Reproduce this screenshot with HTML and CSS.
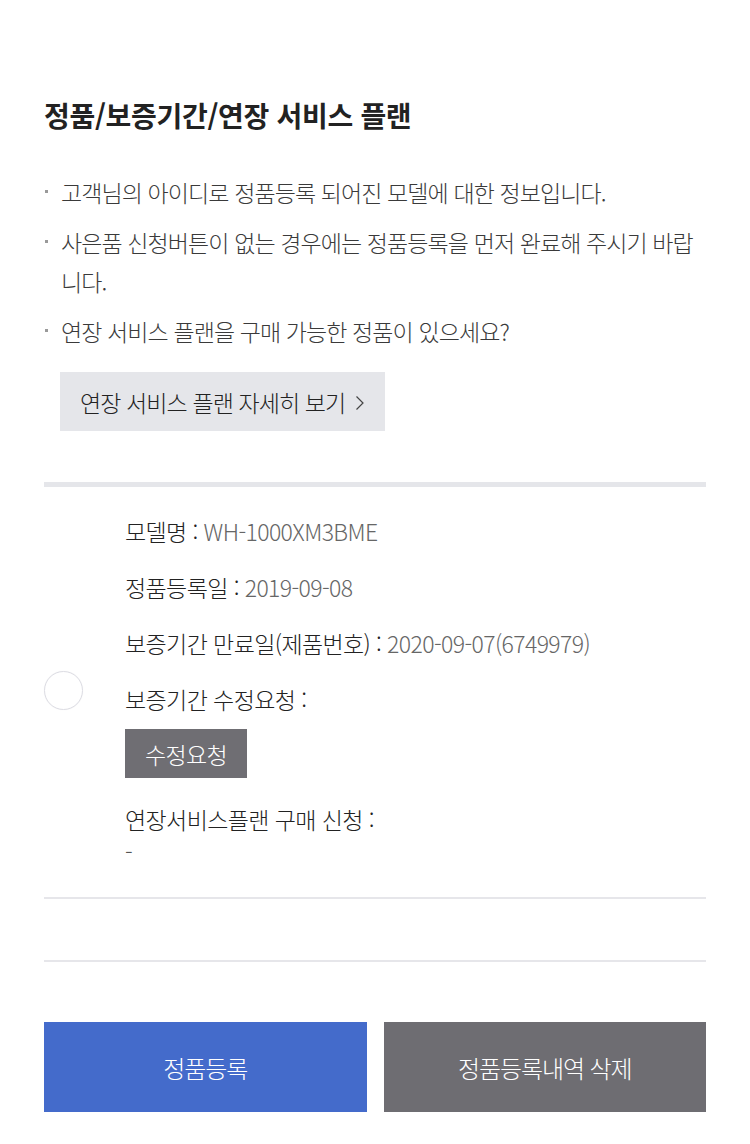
FILE: index.html
```html
<!DOCTYPE html>
<html lang="ko">
<head>
<meta charset="utf-8">
<title>정품/보증기간/연장 서비스 플랜</title>
<link rel="stylesheet" href="styles.css">
</head>
<body>
<div class="page">
  <h2 class="title">정품/보증기간/연장 서비스 플랜</h2>
  <ul class="notes">
    <li>고객님의 아이디로 정품등록 되어진 모델에 대한 정보입니다.</li>
    <li>사은품 신청버튼이 없는 경우에는 정품등록을 먼저 완료해 주시기 바랍니다.</li>
    <li>연장 서비스 플랜을 구매 가능한 정품이 있으세요?</li>
  </ul>
  <div class="more-wrap">
    <a class="more-btn" href="#">연장 서비스 플랜 자세히 보기 <svg class="chev" width="10" height="16" viewBox="0 0 10 16"><path d="M1.5 1.5 L8 8 L1.5 14.5" fill="none" stroke="#444" stroke-width="1.2"/></svg></a>
  </div>
  <div class="product">
    <div class="radio-col"><span class="radio"></span></div>
    <div class="info">
      <p class="row"><span class="lbl">모델명 :</span> <span class="val">WH-1000XM3BME</span></p>
      <p class="row"><span class="lbl">정품등록일 :</span> <span class="val">2019-09-08</span></p>
      <p class="row"><span class="lbl">보증기간 만료일(제품번호) :</span> <span class="val">2020-09-07(6749979)</span></p>
      <p class="row"><span class="lbl">보증기간 수정요청 :</span></p>
      <button class="edit-btn">수정요청</button>
      <p class="row-last"><span class="lbl">연장서비스플랜 구매 신청 :</span></p>
      <p class="row-dash"><span class="dash">-</span></p>
    </div>
  </div>
  <div class="empty-row"></div>
  <div class="actions">
    <button class="act blue">정품등록</button>
    <button class="act gray">정품등록내역 삭제</button>
  </div>
</div>
</body>
</html>
```
FILE: styles.css
```css
html, body {
  margin: 0;
  padding: 0;
  background: #fff;
}
body {
  font-family: "Noto Sans CJK KR", "Noto Sans", sans-serif;
  color: #222;
}
.page {
  padding: 97px 44px 40px;
}
.title {
  margin: 0;
  font-size: 28px;
  line-height: 36px;
  font-weight: 700;
  letter-spacing: -0.3px;
  color: #222;
}
.notes {
  list-style: none;
  margin: 40px 0 0;
  padding: 0;
}
.notes li {
  position: relative;
  padding-left: 17px;
  font-size: 23px;
  font-weight: 300;
  line-height: 39px;
  letter-spacing: -0.9px;
  color: #3a3a3a;
  margin-bottom: 11px;
}
.notes li:last-child {
  margin-bottom: 0;
}
.notes li::before {
  content: "";
  position: absolute;
  left: 1px;
  top: 17px;
  width: 3px;
  height: 3px;
  background: #9a9a9a;
}
.more-wrap {
  padding-left: 16px;
  margin-top: 21px;
}
.more-btn {
  display: inline-flex;
  align-items: center;
  gap: 10px;
  height: 59px;
  padding: 0 20px;
  background: #e5e6ea;
  color: #222;
  text-decoration: none;
  font-size: 23px;
  font-weight: 300;
  letter-spacing: -0.9px;
}
.chev {
  margin-top: 2px;
}
.product {
  margin-top: 51px;
  border-top: 5px solid #e5e6ea;
  border-bottom: 2px solid #e6e6ea;
  display: flex;
  align-items: center;
  padding: 26px 0 30px;
}
.radio-col {
  width: 81px;
  flex: none;
}
.radio {
  display: block;
  width: 37px;
  height: 37px;
  border: 1.5px solid #dcdce3;
  border-radius: 50%;
  box-shadow: 0 0 1px rgba(0,0,0,0.08);
}
.info {
  flex: 1;
}
.row {
  margin: 0 0 20px;
  font-size: 23px;
  font-weight: 300;
  line-height: 36px;
  letter-spacing: -0.6px;
}
.lbl {
  color: #222;
}
.val {
  color: #666;
}
.edit-btn {
  display: block;
  margin: -8px 0 25px;
  width: 122px;
  height: 49px;
  border: 0;
  border-radius: 0;
  background: #6f6e73;
  color: #fff;
  font-family: inherit;
  font-size: 23px;
  font-weight: 300;
  letter-spacing: -0.6px;
  padding: 0;
}
.row-last,
.row-dash {
  margin: 0;
  font-size: 23px;
  font-weight: 300;
  line-height: 32px;
  letter-spacing: -0.6px;
}
.dash {
  color: #555;
}
.empty-row {
  height: 61px;
  border-bottom: 2px solid #e6e6ea;
}
.actions {
  display: grid;
  grid-template-columns: 1fr 1fr;
  gap: 17px;
  margin-top: 60px;
}
.act {
  height: 90px;
  border: 0;
  border-radius: 0;
  color: #fff;
  font-family: inherit;
  font-size: 24px;
  font-weight: 300;
  letter-spacing: -1.1px;
  padding: 0;
}
.act.blue {
  background: #446bcb;
}
.act.gray {
  background: #6e6d72;
}
```
